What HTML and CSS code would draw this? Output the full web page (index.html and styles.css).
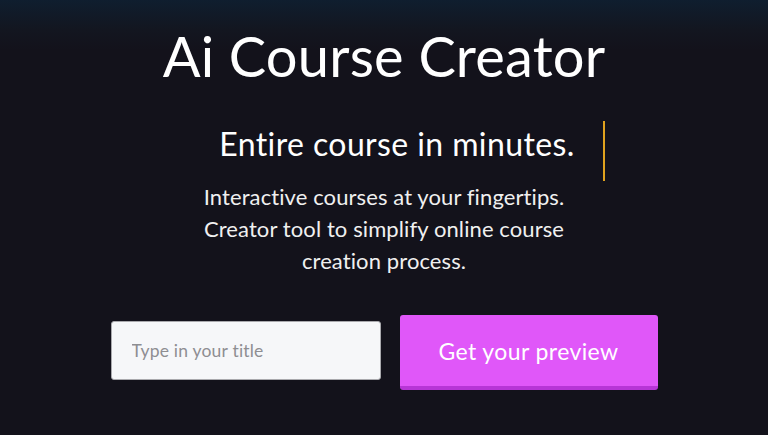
FILE: index.html
```html
<!DOCTYPE html>
<html>
<head>
<meta charset="utf-8">
<link rel="stylesheet" href="styles.css">
</head>
<body>
<main class="hero">
  <h1 class="title">Ai Course Creator</h1>
  <div class="typed">
    <span class="typed-text">Entire course in minutes.</span>
    <span class="cursor"></span>
  </div>
  <p class="lead">Interactive courses at your fingertips.<br>Creator tool to simplify online course<br>creation process.</p>
  <form class="cta">
    <input class="field" type="text" placeholder="Type in your title">
    <button class="btn" type="button">Get your preview</button>
  </form>
</main>
</body>
</html>
```
FILE: styles.css
```css
html, body {
  margin: 0;
  padding: 0;
  height: 100%;
}
body {
  background: linear-gradient(to bottom, #0f1e2f 0px, #131620 30px, #13121b 50px, #13121b 100%);
  font-family: Lato, "Open Sans", sans-serif;
  color: #ffffff;
  overflow: hidden;
}
.hero {
  display: flex;
  flex-direction: column;
  align-items: center;
  padding-top: 22px;
}
.title {
  margin: 0;
  font-size: 56px;
  font-weight: 400;
  line-height: 68px;
  letter-spacing: 0.2px;
}
.typed {
  display: flex;
  align-items: center;
  gap: 28px;
  margin-top: 31px;
  margin-left: 56px;
  height: 60px;
}
.typed-text {
  font-size: 32px;
  font-weight: 400;
  line-height: 40px;
  letter-spacing: 0.4px;
  margin-top: -14px;
}
.cursor {
  width: 2px;
  height: 60px;
  background: #e0a21e;
}
.lead {
  margin: 0;
  text-align: center;
  font-size: 22px;
  font-weight: 400;
  line-height: 32px;
  color: #f0f0f0;
  letter-spacing: 0.1px;
}
.cta {
  display: flex;
  align-items: flex-start;
  gap: 19px;
  margin-top: 38px;
}
.field {
  box-sizing: border-box;
  width: 270px;
  height: 59px;
  margin-top: 6px;
  padding: 0 20px;
  background: #f6f7f9;
  border: 1px solid #a9a9ad;
  border-radius: 3px;
  font-family: Lato, "Open Sans", sans-serif;
  font-size: 17.5px;
  font-weight: 400;
  letter-spacing: 0.2px;
  color: #333;
  outline: none;
}
.field::placeholder {
  color: #8e8e92;
}
.btn {
  box-sizing: border-box;
  width: 258px;
  height: 75px;
  background: #e057f9;
  border: none;
  border-bottom: 4px solid #b735d6;
  border-radius: 3px;
  color: #ffffff;
  font-family: Lato, "Open Sans", sans-serif;
  font-size: 23px;
  font-weight: 400;
  letter-spacing: 0.4px;
  padding: 0;
}
```
